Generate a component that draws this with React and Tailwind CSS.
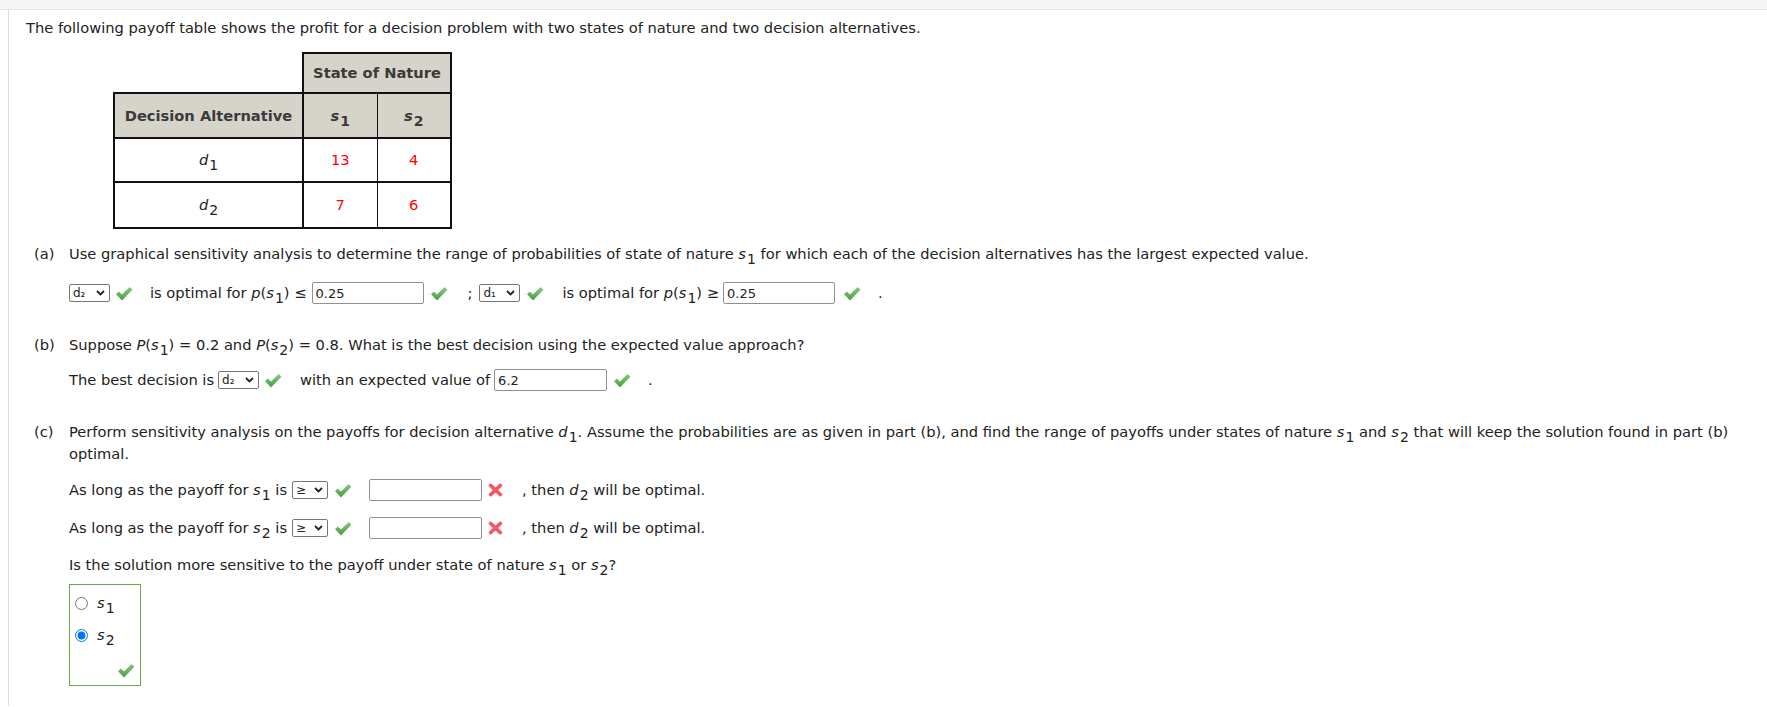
import React from 'react';

const Check = ({ className = '' }) => (
    <svg width="18" height="15" viewBox="0 0 18 15" className={`shrink-0 ${className}`}>
        <defs>
            <linearGradient id="chk" x1="0" y1="0" x2="0" y2="1">
                <stop offset="0" stopColor="#86c97c" />
                <stop offset="1" stopColor="#4d9c4a" />
            </linearGradient>
        </defs>
        <path d="M1 8.2 L3.8 5.6 L7 8.6 L14.6 1 L17.4 3.8 L7 14.4 Z" fill="url(#chk)" />
    </svg>
);

const Cross = ({ className = '' }) => (
    <svg width="15" height="14" viewBox="0 0 15 14" className={`shrink-0 ${className}`}>
        <path d="M2.6 2.4 L12.4 11.6 M12.4 2.4 L2.6 11.6" stroke="#f05a62" strokeWidth="3.6" strokeLinecap="round" />
    </svg>
);

const Sel = ({ label, w = 'w-[41px]' }) => (
    <span className={`inline-flex items-center justify-between h-[18px] ${w} shrink-0 border border-[#767676] rounded-[2px] bg-white pl-[3px] pr-[4px] text-[12px] leading-none text-[#222]`}>
        <span>{label}</span>
        <svg width="9" height="6" viewBox="0 0 9 6">
            <path d="M1 1 L4.5 4.5 L8 1" stroke="#222" strokeWidth="1.8" fill="none" />
        </svg>
    </span>
);

const Box = ({ value = '', w = 'w-[112px]' }) => (
    <span className={`inline-flex items-center h-[22px] ${w} shrink-0 border border-[#8f8f8f] rounded-[2px] bg-white pl-[3px] text-[13px] leading-none text-[#222]`}>
        {value}
    </span>
);

// italic variable with subscript
const V = ({ v, n }) => (
    <span className="whitespace-nowrap">
        <i>{v}</i>
        <span className="relative top-[5px] text-[14px] leading-none ml-[1px]">{n}</span>
    </span>
);

const Part = ({ label, children }) => (
    <div className="flex ml-[8px]">
        <div className="w-[35px] shrink-0">{label}</div>
        <div className="flex-1 min-w-0 pr-[20px]">{children}</div>
    </div>
);

const App = () => {
    const th = 'bg-[#d6d3ca] text-[#3a3a3a] font-bold border-2 border-[#111] text-center';
    const td = 'border-2 border-[#111] text-center';

    return (
        <div className="min-h-screen bg-white text-[#222] text-[14.67px] leading-[22px] font-['DejaVu_Sans','Verdana',sans-serif]">
            <div className="h-[10px] bg-[#f5f5f5] border-b border-[#e2e2e2]" />
            <div className="ml-[8px] min-h-[696px] border-l border-[#dcdcdc] pl-[17px] pt-[7px]">
                <p>The following payoff table shows the profit for a decision problem with two states of nature and two decision alternatives.</p>

                <table className="ml-[87px] mt-[13px] border-collapse">
                    <tbody>
                        <tr>
                            <td className="w-[189px] p-0" />
                            <th colSpan={2} className={`${th} h-[40px]`}>State of Nature</th>
                        </tr>
                        <tr>
                            <th className={`${th} h-[45px] w-[189px]`}>Decision Alternative</th>
                            <th className={`${th} w-[74px] border-r`}><V v="s" n="1" /></th>
                            <th className={`${th} w-[74px] border-l`}><V v="s" n="2" /></th>
                        </tr>
                        <tr>
                            <td className={`${td} h-[44px]`}><V v="d" n="1" /></td>
                            <td className={`${td} text-[#ff0000] border-r`}>13</td>
                            <td className={`${td} text-[#ff0000] border-l`}>4</td>
                        </tr>
                        <tr>
                            <td className={`${td} h-[46px]`}><V v="d" n="2" /></td>
                            <td className={`${td} text-[#ff0000] border-r`}>7</td>
                            <td className={`${td} text-[#ff0000] border-l`}>6</td>
                        </tr>
                    </tbody>
                </table>

                <div className="mt-[14px]">
                    <Part label="(a)">
                        <p>
                            Use graphical sensitivity analysis to determine the range of probabilities of state of nature <V v="s" n="1" /> for which each of the decision alternatives has the largest expected value.
                        </p>
                        <div className="flex items-center h-[22px] mt-[17px] whitespace-nowrap">
                            <Sel label="d₂" />
                            <Check className="ml-[5px]" />
                            <span className="ml-[17px]">is optimal for <i>p</i>(<V v="s" n="1" />) ≤</span>
                            <Box value="0.25" w="w-[112px] ml-[5px]" />
                            <Check className="ml-[6px]" />
                            <span className="ml-[20px]">;</span>
                            <Sel label="d₁" w="w-[41px] ml-[7px]" />
                            <Check className="ml-[6px]" />
                            <span className="ml-[18px]">is optimal for <i>p</i>(<V v="s" n="1" />) ≥</span>
                            <Box value="0.25" w="w-[112px] ml-[4px]" />
                            <Check className="ml-[8px]" />
                            <span className="ml-[17px]">.</span>
                        </div>
                    </Part>
                </div>

                <div className="mt-[30px]">
                    <Part label="(b)">
                        <p>
                            Suppose <i>P</i>(<V v="s" n="1" />) = 0.2 and <i>P</i>(<V v="s" n="2" />) = 0.8. What is the best decision using the expected value approach?
                        </p>
                        <div className="flex items-center h-[22px] mt-[13px] whitespace-nowrap">
                            <span>The best decision is</span>
                            <Sel label="d₂" w="w-[41px] ml-[4px]" />
                            <Check className="ml-[5px]" />
                            <span className="ml-[18px]">with an expected value of</span>
                            <Box value="6.2" w="w-[113px] ml-[4px]" />
                            <Check className="ml-[6px]" />
                            <span className="ml-[17px]">.</span>
                        </div>
                    </Part>
                </div>

                <div className="mt-[30px]">
                    <Part label="(c)">
                        <p>
                            Perform sensitivity analysis on the payoffs for decision alternative <V v="d" n="1" />. Assume the probabilities are as given in part (b), and find the range of payoffs under states of nature <V v="s" n="1" /> and <V v="s" n="2" /> that will keep the solution found in part (b) optimal.
                        </p>
                        <div className="flex items-center h-[22px] mt-[14px] whitespace-nowrap">
                            <span>As long as the payoff for <V v="s" n="1" /> is</span>
                            <Sel label="≥" w="w-[36px] h-[17px] ml-[5px]" />
                            <Check className="ml-[6px]" />
                            <Box w="w-[113px] ml-[17px]" />
                            <Cross className="ml-[6px]" />
                            <span className="ml-[19px]">, then <V v="d" n="2" /> will be optimal.</span>
                        </div>
                        <div className="flex items-center h-[22px] mt-[16px] whitespace-nowrap">
                            <span>As long as the payoff for <V v="s" n="2" /> is</span>
                            <Sel label="≥" w="w-[36px] h-[17px] ml-[5px]" />
                            <Check className="ml-[6px]" />
                            <Box w="w-[113px] ml-[17px]" />
                            <Cross className="ml-[6px]" />
                            <span className="ml-[19px]">, then <V v="d" n="2" /> will be optimal.</span>
                        </div>
                        <p className="mt-[15px]">
                            Is the solution more sensitive to the payoff under state of nature <V v="s" n="1" /> or <V v="s" n="2" />?
                        </p>
                        <div className="mt-[8px] w-[72px] h-[102px] border border-[#6aaa46] pt-[11px] pl-[5px] relative">
                            <label className="flex items-center gap-[9px] h-[14px]">
                                <input type="radio" name="sens" readOnly className="m-0 w-[13px] h-[13px]" />
                                <V v="s" n="1" />
                            </label>
                            <label className="flex items-center gap-[9px] h-[14px] mt-[18px]">
                                <input type="radio" name="sens" defaultChecked className="m-0 w-[13px] h-[13px]" />
                                <V v="s" n="2" />
                            </label>
                            <Check className="absolute left-[47px] top-[78px]" />
                        </div>
                    </Part>
                </div>
            </div>
        </div>
    );
};

export default App;
